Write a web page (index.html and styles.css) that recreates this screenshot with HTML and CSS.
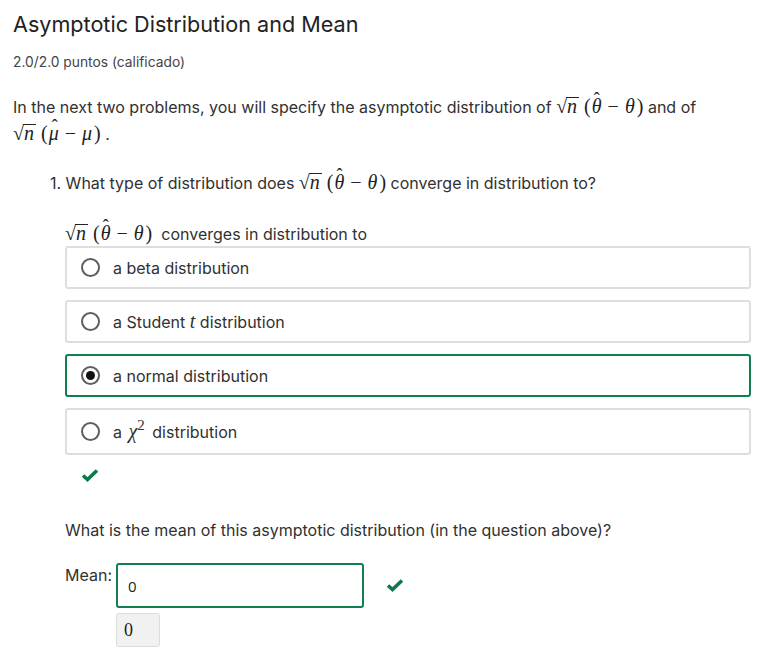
FILE: index.html
```html
<!DOCTYPE html>
<html>
<head>
<meta charset="utf-8">
<link rel="stylesheet" href="styles.css">
</head>
<body>
<div class="page">
  <h2 class="title">Asymptotic Distribution and Mean</h2>
  <div class="points">2.0/2.0 puntos (calificado)</div>
  <p class="intro">In the next two problems, you will specify the asymptotic distribution of <span class="math"><span class="sqrt"><span class="rs">√</span><span class="rad">n</span></span><span class="par">(</span><span class="hat">θ</span><span class="minus">−</span><span class="mi">θ</span><span class="par r">)</span></span> and of<br><span class="math"><span class="sqrt"><span class="rs">√</span><span class="rad">n</span></span><span class="par">(</span><span class="hat mu">μ</span><span class="minus">−</span><span class="mi">μ</span><span class="par r">)</span></span> .</p>

  <div class="problem">
    <p class="question">1. What type of distribution does <span class="math"><span class="sqrt"><span class="rs">√</span><span class="rad">n</span></span><span class="par">(</span><span class="hat">θ</span><span class="minus">−</span><span class="mi">θ</span><span class="par r">)</span></span> converge in distribution to?</p>

    <div class="answer">
      <p class="label"><span class="math"><span class="sqrt"><span class="rs">√</span><span class="rad">n</span></span><span class="par">(</span><span class="hat">θ</span><span class="minus">−</span><span class="mi">θ</span><span class="par r">)</span></span>&nbsp; converges in distribution to</p>
      <div class="options">
        <label class="opt"><span class="radio"></span><span>a beta distribution</span></label>
        <label class="opt"><span class="radio"></span><span>a Student <span class="mi">t</span> distribution</span></label>
        <label class="opt sel"><span class="radio on"></span><span>a normal distribution</span></label>
        <label class="opt tall"><span class="radio"></span><span>a <span class="mi chi">χ</span><sup class="sup">2</sup> distribution</span></label>
      </div>
      <div class="check-row"><svg class="check" width="18" height="14" viewBox="0 0 18 14"><path d="M2 7.5 L6.5 11.5 L16 2.5" fill="none" stroke="#0d7a4e" stroke-width="3.6"/></svg></div>

      <p class="q2">What is the mean of this asymptotic distribution (in the question above)?</p>
      <div class="mean-row">
        <span class="mean-label">Mean:</span>
        <div class="mean-col">
          <div class="input">0</div>
          <div class="preview">0</div>
        </div>
        <svg class="check check2" width="18" height="14" viewBox="0 0 18 14"><path d="M2 7.5 L6.5 11.5 L16 2.5" fill="none" stroke="#0d7a4e" stroke-width="3.6"/></svg>
      </div>
    </div>
  </div>
</div>
</body>
</html>
```
FILE: styles.css
```css
* { box-sizing: border-box; }
body {
  margin: 0;
  font-family: Inter, "Open Sans", sans-serif;
  color: #313131;
  background: #fff;
}
.page { padding: 9px 13px 0 13px; }
.title {
  margin: 0;
  font-size: 21.6px;
  font-weight: 400;
  color: #222;
  line-height: 30px;
}
.points {
  margin-top: 14px;
  font-size: 13.8px;
  color: #454545;
  line-height: 18px;
}
.intro {
  margin: 23px 0 0 0;
  font-size: 16px;
  line-height: 27px;
  color: #313131;
}
.math {
  font-family: "Liberation Serif", "DejaVu Serif", serif;
  font-size: 20px;
  white-space: nowrap;
  color: #222;
  line-height: 0;
}
.sqrt { display: inline-block; position: relative; }
.rs { font-style: normal; font-size: 20px; margin-right: -1px; }
.rad {
  font-style: italic;
  border-top: 1px solid #222;
  padding: 0 2px 0 1px;
  line-height: 17px;
  display: inline-block;
}
.par { margin: 0 1px 0 5px; font-style: normal; }
.par.r { margin: 0 0 0 2px; }
.hat {
  font-style: italic;
  position: relative;
  display: inline-block;
  line-height: 20px;
}
.hat::after {
  content: "ˆ";
  position: absolute;
  left: 2px;
  top: -7px;
  font-style: normal;
  font-size: 18px;
}
.hat.mu::after { left: 3px; }
.mi { font-family: "Liberation Serif", "DejaVu Serif", serif; font-style: italic; font-size: 20px; line-height: 0; }
.minus { margin: 0 6px 0 6px; }
.problem { padding-left: 37px; }
.question {
  margin: 24px 0 0 0;
  font-size: 16px;
  line-height: 22px;
}
.answer { padding-left: 15px; }
.label {
  margin: 29px 0 0 0;
  font-size: 16px;
  line-height: 22px;
}
.options {
  display: flex;
  flex-direction: column;
  gap: 11px;
  margin-top: 1px;
  width: 686px;
}
.opt {
  display: flex;
  align-items: center;
  gap: 13px;
  height: 43px;
  padding: 0 14px;
  border: 2px solid #dedede;
  border-radius: 3px;
  font-size: 16px;
  color: #313131;
}
.opt.tall { height: 47px; }
.opt.sel { border-color: #127f4f; }
.radio {
  width: 19px;
  height: 19px;
  border: 2px solid #5e5e5e;
  border-radius: 50%;
  display: flex;
  align-items: center;
  justify-content: center;
  flex: none;
}
.radio.on::after {
  content: "";
  width: 9px;
  height: 9px;
  border-radius: 50%;
  background: #111;
}
.chi { margin-left: 2px; }
.sup { font-family: "Liberation Serif", serif; font-size: 15px; vertical-align: 8px; line-height: 0; margin-right: 3px; }
.check-row { padding: 11px 0 0 16px; height: 29px; }
.q2 {
  margin: 35px 0 0 0;
  font-size: 16px;
  line-height: 22px;
}
.mean-row {
  display: flex;
  align-items: flex-start;
  margin-top: 22px;
}
.mean-label { font-size: 16px; line-height: 22px; margin-right: 4px; padding-top: 1px; }
.mean-col { display: flex; flex-direction: column; gap: 5px; }
.input {
  width: 248px;
  height: 45px;
  border: 2px solid #127f4f;
  border-radius: 3px;
  padding: 0 0 0 10px;
  display: flex;
  align-items: center;
  font-family: "Open Sans", sans-serif;
  font-size: 15px;
  color: #222;
}
.preview {
  width: 44px;
  height: 34px;
  background: #f1f1f1;
  border: 1px solid #dcdcdc;
  border-radius: 3px;
  display: flex;
  align-items: center;
  padding-left: 7px;
  font-family: "Liberation Serif", serif;
  font-size: 18px;
  color: #222;
}
.check2 { margin: 15px 0 0 22px; }
```
